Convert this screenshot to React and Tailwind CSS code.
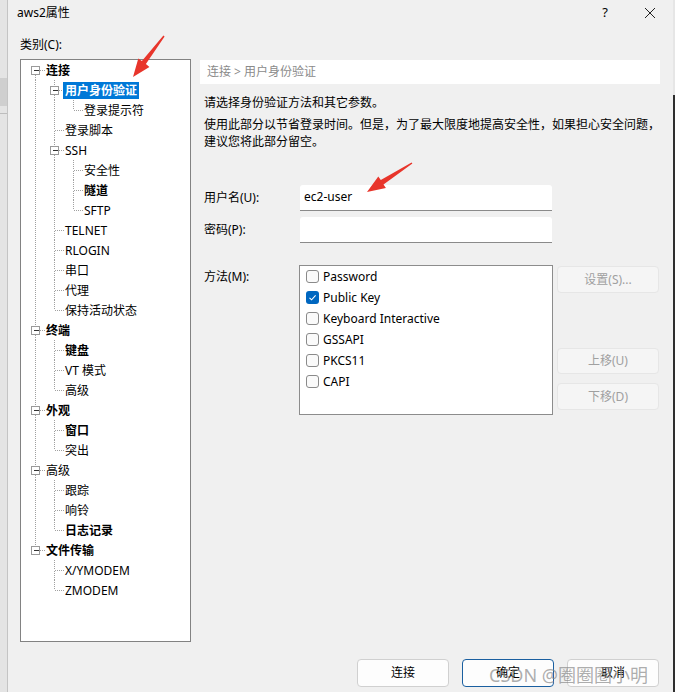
import React from "react";

const items = [
  [0, "连接", true],
  [1, "用户身份验证", true, true],
  [2, "登录提示符"],
  [1, "登录脚本"],
  [1, "SSH"],
  [2, "安全性"],
  [2, "隧道", true],
  [2, "SFTP"],
  [1, "TELNET"],
  [1, "RLOGIN"],
  [1, "串口"],
  [1, "代理"],
  [1, "保持活动状态"],
  [0, "终端", true],
  [1, "键盘", true],
  [1, "VT 模式"],
  [1, "高级"],
  [0, "外观", true],
  [1, "窗口", true],
  [1, "突出"],
  [0, "高级"],
  [1, "跟踪"],
  [1, "响铃"],
  [1, "日志记录", true],
  [0, "文件传输", true],
  [1, "X/YMODEM"],
  [1, "ZMODEM"],
];

function buildRows(list) {
  const stack = [];
  return list.map(([level, label, bold, selected], i) => {
    let last = true;
    for (let j = i + 1; j < list.length; j++) {
      if (list[j][0] <= level) {
        last = list[j][0] < level;
        break;
      }
    }
    const hasChildren = i + 1 < list.length && list[i + 1][0] > level;
    const guides = stack.slice(0, level).map((l) => !l);
    stack[level] = last;
    return { level, label, bold, selected, last, hasChildren, first: i === 0, guides };
  });
}

const rows = buildRows(items);

function TreeLines({ row }) {
  const w = 19 * (row.level + 1);
  const cx = row.level * 19 + 9.5;
  const dot = { stroke: "#a0a0a0", strokeDasharray: "1 1" };
  return (
    <svg width={w} height="20" className="shrink-0" shapeRendering="crispEdges">
      {row.guides.map(
        (g, k) => g && <line key={k} x1={k * 19 + 9.5} y1="0" x2={k * 19 + 9.5} y2="20" {...dot} />
      )}
      {!row.first && <line x1={cx} y1="0" x2={cx} y2="10" {...dot} />}
      {!row.last && <line x1={cx} y1="11" x2={cx} y2="20" {...dot} />}
      <line x1={cx} y1="10.5" x2={w} y2="10.5" {...dot} />
      {row.hasChildren && (
        <>
          <rect x={cx - 4} y="6.5" width="8" height="8" fill="#fff" stroke="#9a9a9a" />
          <line x1={cx - 2} y1="10.5" x2={cx + 3} y2="10.5" stroke="#333" />
        </>
      )}
    </svg>
  );
}

function arrowPoints(sx, sy, tx, ty) {
  const dx = tx - sx;
  const dy = ty - sy;
  const len = Math.hypot(dx, dy);
  const ux = dx / len;
  const uy = dy / len;
  const nx = -uy;
  const ny = ux;
  const bx = tx - ux * 18;
  const by = ty - uy * 18;
  const p = (x, y) => `${x.toFixed(1)},${y.toFixed(1)}`;
  return [
    p(sx + nx * 0.7, sy + ny * 0.7),
    p(bx + nx * 2.5, by + ny * 2.5),
    p(bx + nx * 7, by + ny * 7),
    p(tx, ty),
    p(bx - nx * 7, by - ny * 7),
    p(bx - nx * 2.5, by - ny * 2.5),
    p(sx - nx * 0.7, sy - ny * 0.7),
  ].join(" ");
}

const methods = [
  ["Password", false],
  ["Public Key", true],
  ["Keyboard Interactive", false],
  ["GSSAPI", false],
  ["PKCS11", false],
  ["CAPI", false],
];

function Checkbox({ checked }) {
  return checked ? (
    <span className="w-[13px] h-[13px] rounded-[3px] bg-[#0067c0] flex items-center justify-center shrink-0">
      <svg width="13" height="13" viewBox="0 0 13 13">
        <path d="M3.5 6.8 L5.6 8.8 L9.6 4.4" fill="none" stroke="#fff" strokeWidth="1.1" />
      </svg>
    </span>
  ) : (
    <span className="w-[13px] h-[13px] rounded-[3px] border border-[#8a8a8a] bg-[#fafafa] shrink-0" />
  );
}

export default function App() {
  return (
    <div className="relative w-[675px] h-[692px] overflow-hidden flex bg-[#f0f0f0] text-[12px] text-black font-['Noto_Sans','Noto_Sans_CJK_SC',sans-serif]">
      <div className="w-[8px] shrink-0 flex flex-col bg-[#e4e4e4] border-r border-[#c4c4c4]">
        <div className="h-[78px]" />
        <div className="h-[28px] bg-[#cfcfcf]" />
        <div className="h-[8px] border-b border-[#bdbdbd]" />
      </div>

      <div className="w-[665px] shrink-0 flex flex-col">
        <div className="h-[25px] flex items-center justify-between pl-[9px] pr-[13px]">
          <span className="leading-[25px]">aws2属性</span>
          <div className="flex items-center gap-[25px]">
            <span className="w-[20px] text-center text-[13px]">?</span>
            <svg width="20" height="20" viewBox="0 0 20 20">
              <path d="M5 5 L15 15 M15 5 L5 15" stroke="#222" strokeWidth="1" />
            </svg>
          </div>
        </div>

        <div className="flex mt-[10px] pl-[12px]">
          <div className="w-[171px] shrink-0 flex flex-col">
            <div className="h-[20px] leading-[20px]">类别(C):</div>
            <div className="mt-[4px] h-[583px] border border-[#828282] bg-white pl-[5px]">
              {rows.map((row, i) => (
                <div key={i} className="h-[20px] flex items-center">
                  <TreeLines row={row} />
                  <span
                    className={`h-[17px] leading-[17px] px-[2px] -ml-[1px] whitespace-nowrap ${
                      row.bold ? "font-bold" : ""
                    } ${row.selected ? "bg-[#0078d7] text-white" : ""}`}
                  >
                    {row.label}
                  </span>
                </div>
              ))}
            </div>
          </div>

          <div className="w-[460px] ml-[9px] pt-[25px] flex flex-col">
            <div className="h-[24px] bg-white pl-[7px] leading-[24px] text-[#8a8a8a]">连接 &gt; 用户身份验证</div>
            <p className="mt-[10px] pl-[4px] leading-[17px]">请选择身份验证方法和其它参数。</p>
            <p className="mt-[5px] pl-[4px] leading-[17px]">
              使用此部分以节省登录时间。但是，为了最大限度地提高安全性，如果担心安全问题，
              <br />
              建议您将此部分留空。
            </p>

            <div className="mt-[35px] flex items-center">
              <span className="w-[100px] pl-[4px]">用户名(U):</span>
              <div className="w-[252px] h-[26px] bg-white border-b border-[#8a8a8a] rounded-t-[3px] pl-[4px] leading-[24px]">
                ec2-user
              </div>
            </div>
            <div className="mt-[6px] flex items-center">
              <span className="w-[100px] pl-[4px]">密码(P):</span>
              <div className="w-[252px] h-[26px] bg-white border-b border-[#8a8a8a] rounded-t-[3px]" />
            </div>

            <div className="mt-[22px] flex items-start">
              <span className="w-[99px] pl-[4px] pt-[3px] leading-[17px]">方法(M):</span>
              <div className="w-[254px] h-[150px] border border-[#8c8c8c] bg-white flex flex-col">
                {methods.map(([name, checked]) => (
                  <div key={name} className="h-[21px] flex items-center pl-[6px] gap-[4px]">
                    <Checkbox checked={checked} />
                    <span className="leading-[17px]">{name}</span>
                  </div>
                ))}
              </div>
              <div className="ml-[4px] w-[102px] flex flex-col text-[#a0a0a0]">
                <div className="mt-[1px] h-[27px] rounded-[4px] border border-[#e6e6e6] bg-[#f5f5f5] flex items-center justify-center">
                  设置(S)...
                </div>
                <div className="mt-[55px] h-[26px] rounded-[4px] border border-[#e6e6e6] bg-[#f5f5f5] flex items-center justify-center">
                  上移(U)
                </div>
                <div className="mt-[9px] h-[27px] rounded-[4px] border border-[#e6e6e6] bg-[#f5f5f5] flex items-center justify-center">
                  下移(D)
                </div>
              </div>
            </div>
          </div>
        </div>

        <div className="mt-[17px] flex justify-end gap-[13px] pr-[14px]">
          <div className="w-[92px] h-[28px] rounded-[4px] border border-[#d0d0d0] bg-[#fdfdfd] flex items-center justify-center">
            连接
          </div>
          <div className="w-[92px] h-[28px] rounded-[4px] border border-[#1a5fa0] bg-[#fdfdfd] flex items-center justify-center">
            确定
          </div>
          <div className="w-[92px] h-[28px] rounded-[4px] border border-[#d0d0d0] bg-[#fdfdfd] flex items-center justify-center">
            取消
          </div>
        </div>
      </div>

      <div className="w-[2px] shrink-0 flex flex-col">
        <div className="h-[95px] bg-[#e6e6e6]" />
        <div className="flex-1 bg-[#2e2e2e]" />
      </div>

      <div className="absolute left-[489px] top-[662px] text-[18px] leading-[26px] text-[#8a8a8a]/70 pointer-events-none whitespace-nowrap">
        CSDN @圈圈圈小明
      </div>

      <svg className="absolute inset-0 pointer-events-none" width="675" height="692">
        <polygon points={arrowPoints(164, 36, 133, 77)} fill="#e8352b" />
        <polygon points={arrowPoints(412, 163, 367, 192)} fill="#e8352b" />
      </svg>
    </div>
  );
}
